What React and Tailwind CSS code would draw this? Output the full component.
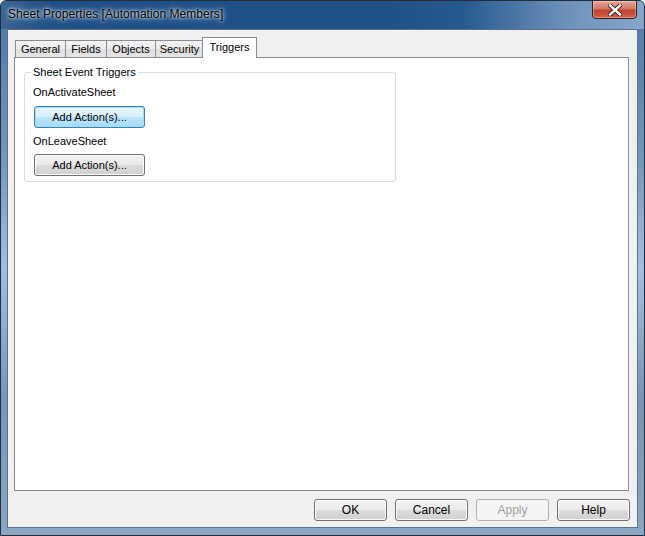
export default function App() {
  const btn =
    "h-[22px] w-[73px] rounded-[3px] border border-[#707070] bg-[linear-gradient(180deg,#f2f2f2_0%,#ebebeb_50%,#dddddd_51%,#cfcfcf_100%)] text-[12px] text-black flex items-center justify-center shadow-[inset_0_0_0_1px_#fcfcfc]";
  const tabs = [
    { name: "General", w: "w-[51px]" },
    { name: "Fields", w: "w-[42px]" },
    { name: "Objects", w: "w-[50px]" },
    { name: "Security", w: "w-[49px]" },
  ];
  return (
    <div className="w-[645px] h-[536px] font-['Liberation_Sans',Arial,sans-serif] bg-white">
      <div className="w-[645px] h-[536px] flex flex-col rounded-t-[6px] border border-[#222d39] bg-[linear-gradient(180deg,#4e77a4_0%,#7497be_30%,#9fc0e2_50%,#7695b8_75%,#8ba7c4_100%)] overflow-hidden">
        <div className="h-[28px] flex items-start justify-between bg-[linear-gradient(90deg,#3a6493_0%,#1f4f86_8%,#1f5088_60%,#275a8f_72%,#6d92ba_88%,#86a7cb_100%)]">
          <div className="pl-[7px] pt-[6px] text-[12px] leading-[15px] tracking-[0.05px] text-black [text-shadow:0_0_6px_#ffffff,0_0_3px_#ffffff]">
            Sheet Properties [Automation Members]
          </div>
          <div className="mr-[7px] w-[45px] h-[19px] -mt-px rounded-b-[4px] border border-[#3d1a1a] bg-[linear-gradient(180deg,#e7a597_0%,#d47766_45%,#c1412f_55%,#d2614a_100%)] flex items-center justify-center shadow-[inset_0_0_0_1px_rgba(255,255,255,0.35)]">
            <svg width="14" height="12" viewBox="0 0 14 12">
              <path d="M2 1.5 L12 10.5 M12 1.5 L2 10.5" stroke="#3a1a1a" strokeWidth="4.2" strokeLinecap="square" />
              <path d="M2 1.5 L12 10.5 M12 1.5 L2 10.5" stroke="#ffffff" strokeWidth="2.4" strokeLinecap="square" />
            </svg>
          </div>
        </div>
        <div className="flex-1 ml-[6px] mr-[6px] mb-[7px] border border-[#5e7186] bg-[#f0f0f0] flex flex-col">
          <div className="flex-1 flex flex-col pt-[7px] pl-[6px] pr-[8px]">
            <div className="flex items-end h-[21px] -mb-px relative z-10 pl-[1px]">
              {tabs.map((t, i) => (
                <div
                  key={t.name}
                  className={`${t.w} ${i > 0 ? "-ml-px" : ""} h-[17px] mb-px border border-b-0 border-[#898c95] bg-[linear-gradient(180deg,#f3f3f3_0%,#ebebeb_50%,#dedede_51%,#e5e5e5_100%)] text-[11px] leading-[16px] text-black flex justify-center`}
                >
                  {t.name}
                </div>
              ))}
              <div className="w-[55px] -ml-[2px] h-[21px] border border-b-0 border-[#898c95] bg-white text-[11px] leading-[18px] text-black flex justify-center">
                Triggers
              </div>
            </div>
            <div className="flex-1 border border-[#898c95] bg-white">
              <fieldset className="ml-[9px] mt-[8px] w-[372px] h-[116px] border border-[#d5dfe5] rounded-[3px] pl-[8px]">
                <legend className="-ml-[2px] px-[2px] text-[11px] leading-[13px] text-black">
                  Sheet Event Triggers
                </legend>
                <div className="flex flex-col items-start">
                  <div className="mt-[7px] text-[11px] leading-[13px] text-black">OnActivateSheet</div>
                  <div className="mt-[7px] h-[22px] w-[111px] ml-[1px] rounded-[3px] border border-[#3c7fb1] bg-[linear-gradient(180deg,#eaf6fd_0%,#d9f0fc_50%,#bee6fd_51%,#a7d9f5_100%)] shadow-[inset_0_0_0_1px_#9fe0fb] text-[11px] text-black flex items-center justify-center">
                    Add Action(s)...
                  </div>
                  <div className="mt-[7px] text-[11px] leading-[13px] text-black">OnLeaveSheet</div>
                  <div className="mt-[6px] h-[22px] w-[111px] ml-[1px] rounded-[3px] border border-[#707070] bg-[linear-gradient(180deg,#f2f2f2_0%,#ebebeb_50%,#dddddd_51%,#cfcfcf_100%)] shadow-[inset_0_0_0_1px_#fcfcfc] text-[11px] text-black flex items-center justify-center">
                    Add Action(s)...
                  </div>
                </div>
              </fieldset>
            </div>
          </div>
          <div className="flex justify-end gap-[8px] pr-[7px] pt-[8px] pb-[6px]">
            <div className={btn}>OK</div>
            <div className={btn}>Cancel</div>
            <div className="h-[22px] w-[73px] rounded-[3px] border border-[#adb2b5] bg-[#f4f4f4] text-[12px] text-[#a0a0a0] flex items-center justify-center">
              Apply
            </div>
            <div className={btn}>Help</div>
          </div>
        </div>
      </div>
    </div>
  );
}
